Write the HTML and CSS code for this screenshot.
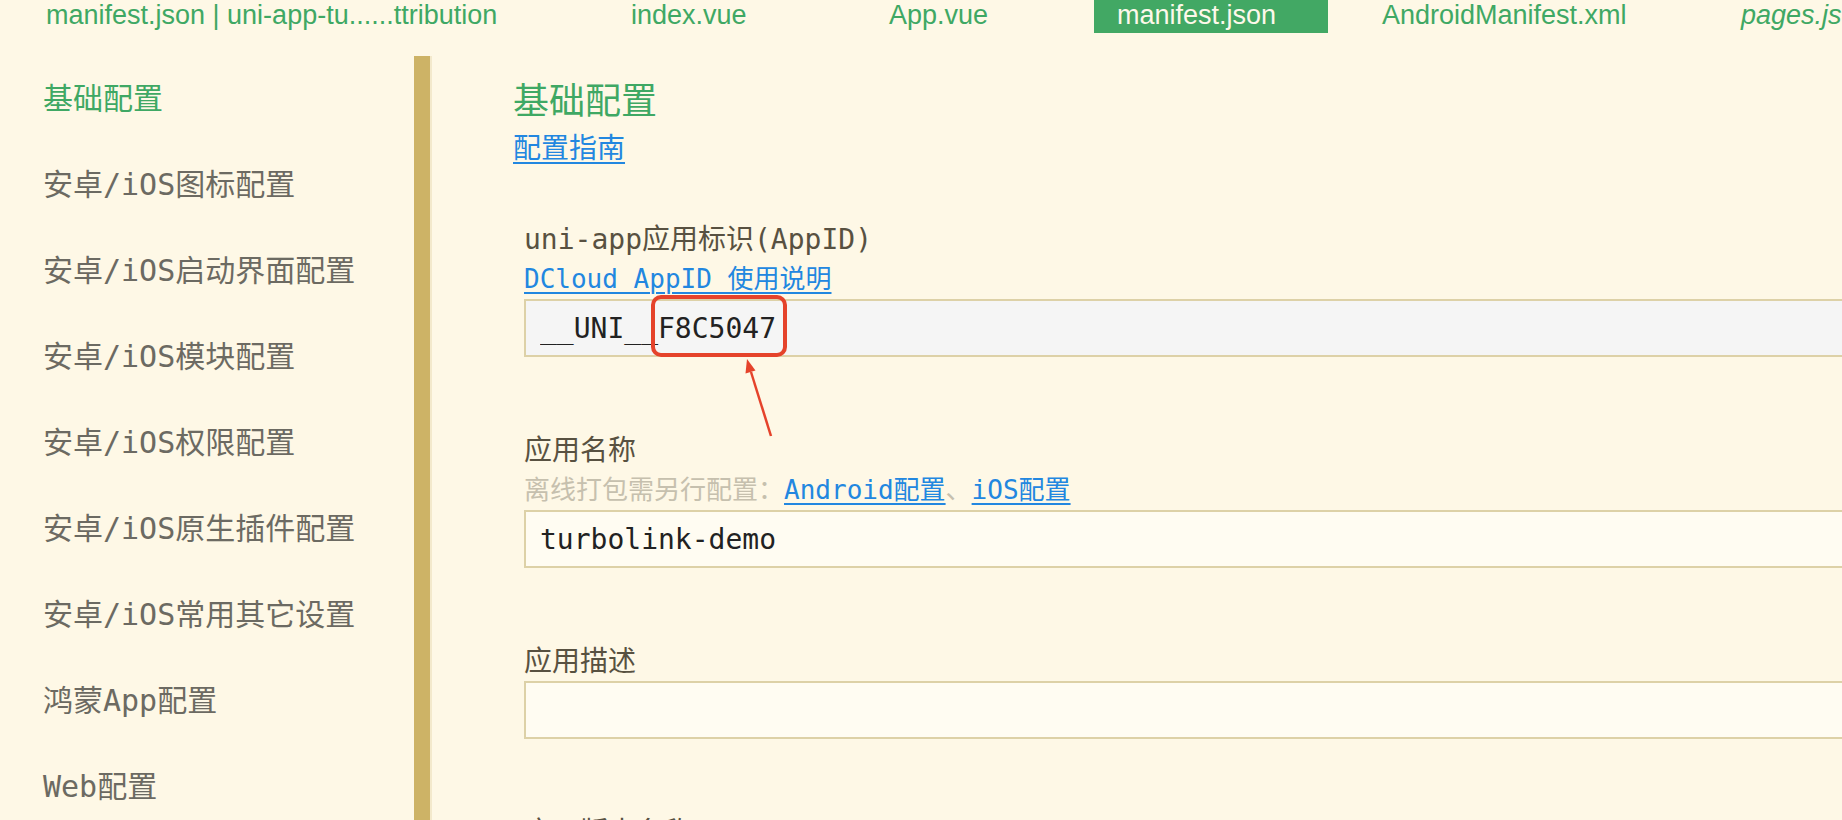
FILE: index.html
```html
<!DOCTYPE html>
<html lang="zh-CN">
<head>
<meta charset="utf-8">
<title>manifest.json</title>
<link rel="stylesheet" href="styles.css">
</head>
<body>
<div class="app">
  <nav class="tabs">
    <div class="tab t1">manifest.json | uni-app-tu......ttribution</div>
    <div class="tab t2">index.vue</div>
    <div class="tab t3">App.vue</div>
    <div class="tab t4 active">manifest.json</div>
    <div class="tab t5">AndroidManifest.xml</div>
    <div class="tab t6">pages.json</div>
  </nav>
  <div class="workspace">
    <aside class="sidebar">
      <ul class="menu">
        <li class="menu-item current">基础配置</li>
        <li class="menu-item">安卓/iOS图标配置</li>
        <li class="menu-item">安卓/iOS启动界面配置</li>
        <li class="menu-item">安卓/iOS模块配置</li>
        <li class="menu-item">安卓/iOS权限配置</li>
        <li class="menu-item">安卓/iOS原生插件配置</li>
        <li class="menu-item">安卓/iOS常用其它设置</li>
        <li class="menu-item">鸿蒙App配置</li>
        <li class="menu-item">Web配置</li>
      </ul>
    </aside>
    <div class="divider"></div>
    <main class="main">
      <h1 class="title">基础配置</h1>
      <div class="guide"><a class="link">配置指南</a></div>
      <div class="fields">
        <section class="field">
          <div class="label">uni-app应用标识(AppID)</div>
          <div class="desc"><a class="link">DCloud AppID 使用说明</a></div>
          <input class="input readonly" type="text" value="__UNI__F8C5047" readonly>
          <span class="highlight"></span>
          <svg class="arrow" width="50" height="85" viewBox="0 0 50 85">
            <line x1="17" y1="16" x2="37" y2="80" stroke="#e5432b" stroke-width="2.5"/>
            <polygon points="13,3 21.5,14.5 11.5,17.5" fill="#e5432b"/>
          </svg>
        </section>
        <section class="field">
          <div class="label">应用名称</div>
          <div class="desc">离线打包需另行配置：<a class="link">Android配置</a>、<a class="link">iOS配置</a></div>
          <input class="input" type="text" value="turbolink-demo">
        </section>
        <section class="field">
          <div class="label">应用描述</div>
          <input class="input" type="text" value="">
        </section>
        <section class="field">
          <div class="label">应用版本名称</div>
          <input class="input" type="text" value="1.0.0">
        </section>
      </div>
    </main>
  </div>
</div>
</body>
</html>
```

FILE: styles.css
```css
html, body {
  margin: 0;
  padding: 0;
}
body {
  width: 1842px;
  height: 820px;
  overflow: hidden;
  background: #fef8e6;
  font-family: "DejaVu Sans Mono", "Noto Sans CJK SC", monospace;
}
.app {
  width: 1842px;
  height: 820px;
  overflow: hidden;
}

/* tab bar */
.tabs {
  display: flex;
  height: 33px;
  padding-left: 23px;
  font-family: "Liberation Sans", Arial, sans-serif;
  font-size: 27px;
  color: #3fa864;
  white-space: nowrap;
  overflow: hidden;
}
.tab {
  flex: none;
  box-sizing: border-box;
  padding-left: 23px;
  line-height: 31px;
  height: 33px;
}
.t1 { width: 585px; }
.t2 { width: 258px; }
.t3 { width: 228px; }
.t4 { width: 234px; margin-right: 31px; }
.t5 { width: 359px; }
.t6 { font-style: italic; }
.tab.active {
  background: #42a864;
  color: #fdf8ea;
}

/* workspace */
.workspace {
  display: flex;
  margin-top: 23px;
  height: 764px;
}
.sidebar {
  flex: none;
  width: 414px;
}
.menu {
  list-style: none;
  margin: 0;
  padding: 0 0 0 43px;
  font-size: 30px;
  color: #6c6a62;
}
.menu-item {
  line-height: 86px;
  white-space: nowrap;
}
.menu-item.current {
  color: #3fa864;
}
.divider {
  flex: none;
  width: 16px;
  background: #cdb366;
  border-right: 2px solid #f3e9cc;
}

/* main */
.main {
  flex: 1;
  min-width: 0;
  overflow: hidden;
  padding: 23px 0 0 81px;
}
.title {
  margin: 0;
  font-size: 36px;
  line-height: 46px;
  font-weight: normal;
  color: #3fa864;
}
.guide {
  margin-top: 4px;
  font-size: 28px;
  line-height: 40px;
}
.link {
  color: #2287e0;
  text-decoration: underline;
  text-decoration-thickness: 2px;
  text-underline-offset: 4px;
  cursor: pointer;
}
.fields {
  margin-top: 52px;
}
.field {
  position: relative;
  padding-left: 11px;
}
.field + .field {
  margin-top: 75px;
}
.label {
  font-size: 28px;
  line-height: 38px;
  color: #585141;
  white-space: nowrap;
}
.desc {
  font-size: 26px;
  line-height: 40px;
  color: #c6c0ae;
  white-space: nowrap;
}
.input {
  display: block;
  box-sizing: border-box;
  width: 1500px;
  height: 58px;
  margin: 0;
  padding: 0 14px;
  border: 2px solid #ddd1a7;
  border-radius: 0;
  background: #fffcf2;
  font-family: "DejaVu Sans Mono", "Noto Sans CJK SC", monospace;
  font-size: 28px;
  color: #222222;
  outline: none;
}
.input.readonly {
  background: #f5f5f5;
}

/* annotation overlays */
.highlight {
  position: absolute;
  left: 138px;
  top: 74px;
  width: 136px;
  height: 62px;
  box-sizing: border-box;
  border: 4px solid #e5432b;
  border-radius: 10px;
}
.arrow {
  position: absolute;
  left: 221px;
  top: 135px;
}
```
